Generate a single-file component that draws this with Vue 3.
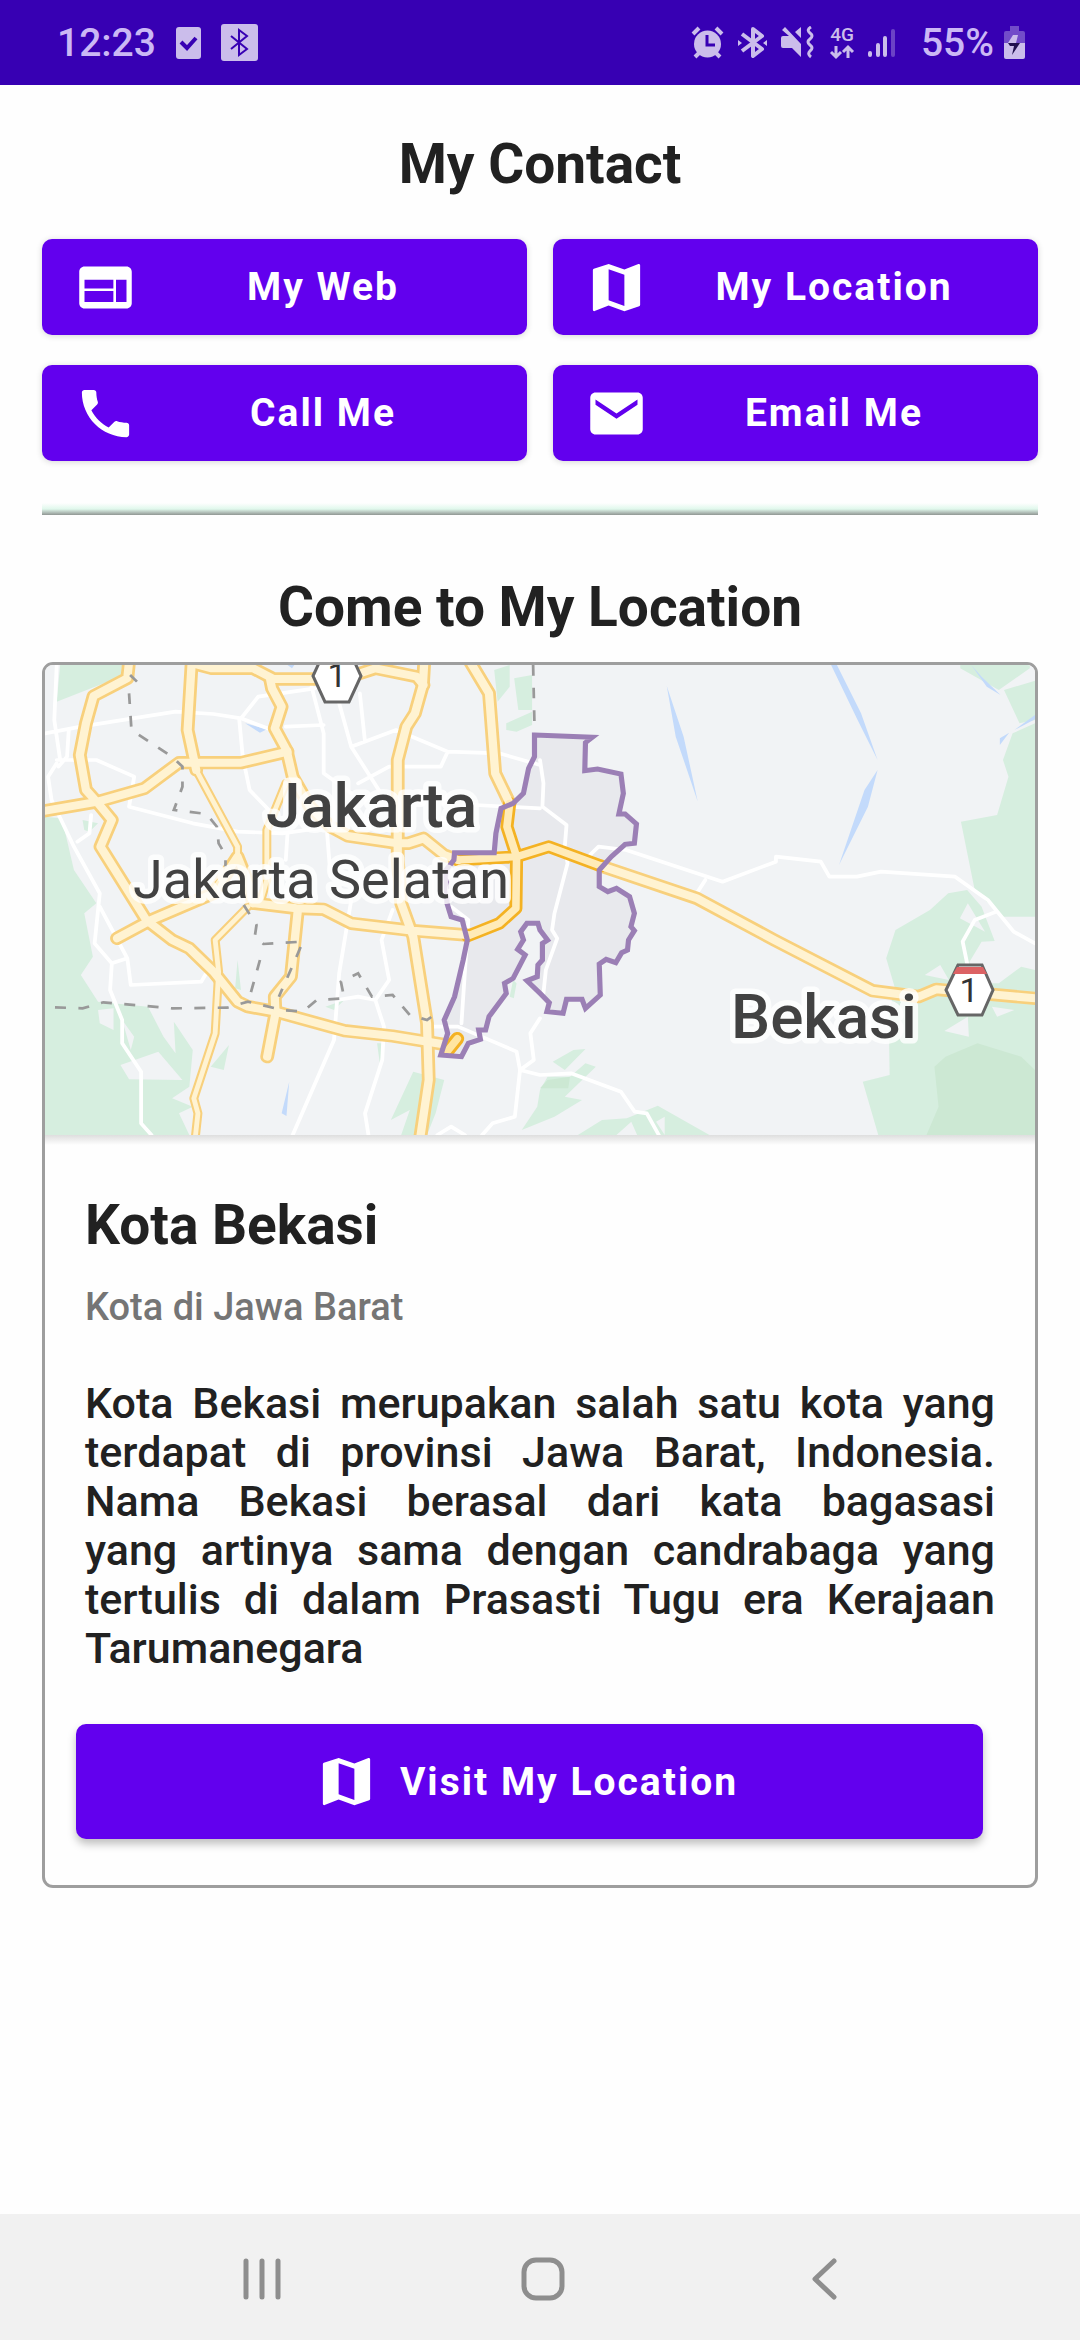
<script setup>
const contacts = [
  { label: 'My Web', icon: 'web' },
  { label: 'My Location', icon: 'map' },
  { label: 'Call Me', icon: 'call' },
  { label: 'Email Me', icon: 'mail' },
]

const icons = {
  web: 'M20 4H4c-1.100 0-2 .9-2 2v12c0 1.100.9 2 2 2h16c1.100 0 2-.9 2-2V6c0-1.100-.9-2-2-2zM15 17.500H4v-4.200h11zm0-5.100H4V9h11zm5 5.100h-4V9h4z',
  map: 'M20.500 3l-.16.03L15 5.100 9 3 3.360 4.900c-.21.07-.36.250-.36.480V20.500c0 .28.220.5.500.5l.16-.03L9 18.900l6 2.100 5.640-1.900c.21-.07.36-.250.36-.480V3.500c0-.28-.220-.5-.500-.5zM15 19l-6-2.110V5l6 2.110V19z',
  call: 'M6.620 10.790c1.440 2.830 3.760 5.140 6.590 6.590l2.200-2.200c.27-.27.67-.36 1.020-.24 1.120.37 2.330.57 3.570.57.55 0 1 .45 1 1V20c0 .55-.45 1-1 1-9.390 0-17-7.610-17-17 0-.55.45-1 1-1h3.500c.55 0 1 .45 1 1 0 1.250.2 2.450.57 3.570.11.35.03.74-.25 1.020l-2.200 2.200z',
  mail: 'M20 4H4c-1.100 0-1.990.9-1.990 2L2 18c0 1.100.9 2 2 2h16c1.100 0 2-.9 2-2V6c0-1.100-.9-2-2-2zm0 4.700l-8 5.300-8-5.300V6.700l8 5.300 8-5.300v2z',
}

const city = {
  name: 'Kota Bekasi',
  kind: 'Kota di Jawa Barat',
  about:
    'Kota Bekasi merupakan salah satu kota yang terdapat di provinsi Jawa Barat, Indonesia. Nama Bekasi berasal dari kata bagasasi yang\u00a0artinya sama dengan candrabaga yang tertulis di dalam Prasasti Tugu era Kerajaan Tarumanegara',
}

const cityBorder =
  '1552,525 1720,532 1700,548 1698,632 1735,627 1803,642 1810,700 1797,762 1815,762 1848,792 1842,850 1815,853 1775,890 1740,930 1740,980 1765,995 1790,985 1828,1010 1842,1060 1832,1100 1842,1112 1825,1140 1822,1170 1805,1178 1788,1208 1760,1198 1740,1212 1743,1305 1700,1345 1690,1318 1645,1318 1635,1360 1588,1355 1595,1328 1568,1300 1530,1262 1560,1250 1562,1215 1575,1200 1575,1150 1590,1140 1568,1110 1562,1090 1530,1090 1512,1115 1520,1140 1503,1168 1525,1185 1490,1255 1465,1270 1470,1300 1420,1370 1410,1410 1390,1410 1395,1438 1360,1450 1340,1490 1280,1485 1300,1420 1290,1380 1320,1310 1345,1200 1357,1140 1342,1080 1310,1070 1298,1030 1295,930 1318,900 1320,878 1435,878 1440,820 1455,745 1490,730 1520,700 1535,625 1552,590'
</script>

<template>
  <div class="screen">
    <header class="status">
      <div class="status-left">
        <time class="clock">12:23</time>
        <svg width="25" height="32" viewBox="0 0 25 32" aria-hidden="true">
          <rect width="25" height="32" rx="3" fill="#cbbdeb" />
          <path d="M5 15l6 6 9-10" fill="none" stroke="#3700b3" stroke-width="4" />
        </svg>
        <svg width="37" height="37" viewBox="0 0 37 37" aria-hidden="true">
          <rect width="37" height="37" rx="3" fill="#cbbdeb" />
          <path d="M10 12l16 13-8 6V6l8 6-16 13" fill="none" stroke="#3700b3" stroke-width="2" />
        </svg>
      </div>
      <div class="status-right">
        <svg width="33" height="33" viewBox="0 0 33 33" fill="none" stroke="#cbbdeb" aria-hidden="true">
          <circle cx="16.500" cy="18" r="13.500" fill="#cbbdeb" stroke="none" />
          <path d="M2 8l6-6M31 8l-6-6M8 27l-4 4M25 27l4 4" stroke-width="4" />
          <path d="M16 9v10h8" stroke="#3700b3" stroke-width="3" />
        </svg>
        <svg width="29" height="33" viewBox="0 0 29 33" fill="none" stroke="#cbbdeb" aria-hidden="true">
          <path d="M4 8l20 15-9 7V3l9 7L4 25" stroke-width="4" stroke-linejoin="round" />
          <path d="M0 14l4 3-4 3zM29 14l-4 3 4 3z" fill="#cbbdeb" stroke="none" />
        </svg>
        <svg width="35" height="33" viewBox="0 0 35 33" fill="#cbbdeb" aria-hidden="true">
          <path d="M2 10h6L1 4l3-3 16 17v13l-9-9H2q-2 0-2-2v-8q0-2 2-2zM20 1v11l-6-6z" />
          <path d="M30 1q-5 3-1 6t0 6q-4 3 0 6t0 6q-3 3 1 6" fill="none" stroke="#cbbdeb" stroke-width="3" />
        </svg>
        <svg class="data" width="24" height="33" viewBox="0 0 24 33" aria-hidden="true">
          <text x="12" y="15" class="network">4G</text>
          <path d="M6 20v10M1 26l5 5 5-5M18 32V22M13 26l5-5 5 5" fill="none" stroke="#cbbdeb" stroke-width="3" />
        </svg>
        <svg width="27" height="33" viewBox="0 0 27 33" stroke="#cbbdeb" stroke-width="4" stroke-linecap="round" aria-hidden="true">
          <path d="M2 27v2M10 19v10M17 12v17" />
          <path d="M25 5v24" opacity=".35" />
        </svg>
        <span class="charge">55%</span>
        <svg width="21" height="33" viewBox="0 0 21 33" fill="#cbbdeb" aria-hidden="true">
          <path d="M6 0h9v5h4q2 0 2 2v10H0V7q0-2 2-2h4z" opacity=".4" />
          <path d="M0 17h21v14q0 2-2 2H2q-2 0-2-2z" />
          <path d="M9 9h5l-2 8H4z" />
          <path d="M4 17h12L8 29l2-9H6z" fill="#21104f" />
        </svg>
      </div>
    </header>

    <main class="content">
      <h1 class="title">My Contact</h1>

      <div class="contacts">
        <button v-for="item in contacts" :key="item.icon" type="button" class="btn">
          <svg class="icon" viewBox="0 0 24 24" aria-hidden="true">
            <path :d="icons[item.icon]" fill="#fff" fill-rule="evenodd" />
          </svg>
          <span class="btn-label">{{ item.label }}</span>
        </button>
      </div>

      <div class="divider" role="separator"></div>

      <h2 class="title location-title">Come to My Location</h2>

      <article class="card">
        <svg class="map" viewBox="0 0 990 470" role="img" aria-label="Peta Kota Bekasi">
          <defs>
            <g id="wide-roads">
              <path d="M375 305L370 355L272 408L250 490L232 585L250 690L285 730L325 780L292 860L425 1080L500 1140L550 1165L620 1235L690 1325L720 1340L800 1355L1000 1412L1140 1428L1300 1455" />
              <path d="M120 754L285 725L420 685L520 608L700 608L835 575" />
              <path d="M557 305L545 510L570 630" />
              <path d="M560 310L615 325L735 325L795 357L930 357M1040 342L1090 325L1210 350L1230 375" />
              <path d="M785 360L790 385L818 440L798 505L832 570L850 650L900 740L960 800L1010 828L1155 850L1185 850L1230 835L1290 885L1330 900" />
              <path d="M1232 305L1228 375L1205 460L1180 500L1155 600L1155 900L1165 1030L1200 1130L1240 1390L1245 1560L1220 1735" />
              <path d="M1365 305L1420 400L1438 640L1480 730" />
              <path d="M740 1030L860 1045L940 1048L1020 1090L1200 1112L1355 1125" />
              <path d="M340 1135L435 1082L620 1000L690 890L725 980L735 1030" />
              <path d="M865 1050L845 1250L798 1310L800 1360L776 1490" />
              <path d="M1745 918L2023 1015L2248 1140L2533 1292L2668 1310L2718 1288L3015 1316" />
            </g>
            <g id="thin-roads">
              <path d="M570 630L690 860L690 890" />
              <path d="M720 1040L625 1140L635 1235L625 1420L563 1615L575 1660L567 1735" />
              <path d="M830 670L775 810L775 960L755 1030" />
            </g>
            <path id="toll-roads" d="M1480 730L1472 800L1500 890L1498 1045L1450 1090L1358 1128M1330 900L1500 890L1593 860L1745 918" />
          </defs>
          <svg width="990" height="470" viewBox="131 315 2874 1410" preserveAspectRatio="none">
            <rect x="131" y="315" width="2874" height="1410" fill="#f1f3f5" />
            <g fill="#d6eedf">
              <path d="M175 315H355L350 350L165 425Z" />
              <path d="M131 770L180 775L215 930L280 1030L245 1060L270 1190L235 1245L285 1325L430 1340L475 1430L510 1480L505 1385L560 1470L550 1580L500 1615L560 1640L520 1660L550 1725H131Z" />
              <path d="M2788 315L2788 325L2900 390L2990 325V315ZM3005 362L2915 390L2960 490L3005 480ZM3005 490L2940 520L2912 600L2928 650L2895 765L2790 785L2830 990L2908 1070H3005Z" />
              <path d="M2753 1000L2808 990L2850 1040L2888 1143L2850 1145L2815 1205L2815 1270L2900 1270L2965 1220L3005 1230V1725H2550L2505 1565L2583 1545L2580 1350L2600 1290L2573 1195L2600 1110L2700 1050Z" />
              <path d="M1435 330L1480 315V380L1445 425ZM1493 355L1545 345V450H1505ZM1545 455L1470 490V510L1500 515L1545 495Z" />
              <path d="M1200 1535L1290 1560L1265 1660L1240 1725H1165L1190 1650L1135 1680ZM1678 1725L1748 1680L1820 1675L1910 1637L2060 1725Z" />
              <path d="M1605 1505L1665 1470L1700 1467L1640 1530ZM1568 1590L1590 1550L1655 1550L1700 1510L1730 1520L1640 1610L1690 1620L1610 1670L1515 1710L1560 1640Z" />
              <path d="M690 1200L700 1290L683 1285ZM665 1455L650 1530L612 1520ZM240 780L285 790L260 815L245 810ZM1000 1320L970 1350L945 1340ZM1095 1450H1115L1103 1510ZM1490 1260L1500 1270L1492 1315L1480 1310Z" />
            </g>
            <path d="M2838 1450L2965 1490L3005 1530V1725H2690L2725 1640L2713 1520L2745 1490ZM1590 1560L1655 1550L1650 1585L1568 1585Z" fill="#cce8d3" />
            <g fill="#f1f3f5">
              <path d="M350 1515L460 1475L530 1560L375 1558ZM285 1350L330 1345V1410L290 1390ZM355 1380L390 1430L380 1470Z" />
              <path d="M2810 1030L2860 1115L2787 1075ZM2730 1215L2755 1260L2685 1245ZM2810 1370L2813 1430L2742 1413ZM2880 1340L2945 1350L2895 1370ZM1790 1725L1833 1685L1850 1725ZM1905 1685L1930 1670V1725Z" />
            </g>
            <g fill="#c3dafb">
              <path d="M1936 378L1985 530L2026 725L1962 530ZM2413 315H2430L2500 460L2548 600L2490 480ZM2548 630L2520 740L2436 915L2510 690ZM2820 315L2850 350L2905 405L2865 380ZM3005 465V478L2945 510ZM2930 518L2903 555V535ZM840 1565L832 1668L818 1660ZM712 490L775 508L755 518ZM835 315H855L848 325Z" />
            </g>
            <polygon :points="cityBorder" fill="#e8e9ed" />
            <g class="streets">
              <path d="M131 520L235 500L510 455L620 462L700 475L790 510M165 315L158 480L175 600M200 510L195 590L170 620M165 600L280 600L390 650L375 740L560 790L690 815L820 820L960 800" />
              <path d="M695 480L705 590L725 690L790 760M700 475L750 410L915 385M905 380L940 520L940 640L1020 700M985 430L1020 560L1100 690M1020 560L1150 510L1300 575L1450 580L1568 615M1300 575L1280 620L1130 620L1040 670M830 500L940 495M1045 400L1060 545M1380 735L1568 745M1240 840L1290 890" />
              <path d="M165 610L140 650L150 720L215 860L290 1000L275 1150L325 1210L320 1290L355 1380V1450L410 1535V1690L440 1725M290 1040L370 1195L380 1275L585 1265L610 1220M325 1210L370 1195M265 765L260 820L225 845M835 820L830 900M950 820L960 950" />
              <path d="M1020 1020L985 1240L970 1440L850 1725M1140 1050L1108 1140L1130 1260L1090 1320L1115 1400L1110 1500L1060 1660L1070 1725M980 1320L1040 1310L1090 1320M1260 1400L1330 1400L1500 1475L1510 1530L1495 1670L1430 1690L1400 1725M1310 1040L1360 1080L1340 1390M1568 1375L1540 1420L1550 1500L1510 1530L1568 1545L1658 1540L1803 1595L1843 1655L1878 1660L1913 1725M1270 1725L1310 1700L1350 1725" />
              <path d="M1568 600L1578 670L1575 740L1645 795L1640 860L1648 910L1610 1060L1603 1110L1618 1135L1585 1230L1578 1300M1713 885L1738 860L1818 870L2098 965L2253 905V890L2383 905L2408 950L2488 950L2558 935L2773 950L2868 1020L2943 1115L3005 1150M2048 960L2023 1000M2893 1055L2830 1080L2795 1145L2808 1210" />
            </g>
            <g class="road-layer">
              <use href="#thin-roads" stroke="#f8d07c" stroke-width="26" />
              <use href="#wide-roads" stroke="#f8d07c" stroke-width="40" />
              <use href="#toll-roads" stroke="#f4b223" stroke-width="38" />
              <use href="#thin-roads" stroke="#fff3d2" stroke-width="14" />
              <use href="#wide-roads" stroke="#fff3d2" stroke-width="24" />
              <use href="#toll-roads" stroke="#ffebb8" stroke-width="22" />
              <path d="M1300 1472L1328 1436" stroke="#f4b223" stroke-width="40" />
              <path d="M1300 1472L1328 1436" stroke="#ffe5a0" stroke-width="22" />
            </g>
            <path class="district" d="M378 345L398 365M375 400L382 510L500 590L530 620V680L505 750L600 762L630 800L635 850L655 885V920M708 1035L745 1095L740 1130L765 1152L880 1145L840 1240L810 1310M755 1200L728 1300M160 1342L240 1345L300 1327L500 1345L660 1343L720 1325L820 1350L880 1355L920 1320L1000 1315L990 1265L1040 1240L1080 1310L1140 1305L1190 1365L1240 1380L1280 1350M1548 315L1552 500" />
            <polygon :points="cityBorder" class="border" />
          </svg>
          <text class="place" x="221" y="162">Jakarta</text>
          <text class="place place-minor" x="88" y="233">Jakarta Selatan</text>
          <text class="place" x="686" y="373">Bekasi</text>
          <g class="shield">
            <path d="M268 11L280-15H304L316 11L304 37H280Z" />
            <text x="292" y="22">1</text>
            <path d="M901 325L913 300H937L948 325L937 350H913Z" />
            <path d="M912 302H938L942 309H908Z" class="shield-band" />
            <text x="924" y="337">1</text>
          </g>
        </svg>

        <div class="card-body">
          <h3 class="title city-name">{{ city.name }}</h3>
          <p class="kind">{{ city.kind }}</p>
          <p class="about">{{ city.about }}</p>
        </div>

        <button type="button" class="btn visit">
          <svg class="icon" viewBox="0 0 24 24" aria-hidden="true">
            <path :d="icons.map" fill="#fff" fill-rule="evenodd" />
          </svg>
          <span>Visit My Location</span>
        </button>
      </article>
    </main>

    <nav class="system-nav">
      <button type="button" aria-label="Recent apps">
        <svg width="44" height="44" viewBox="0 0 44 44"><path d="M6 4v36M22 4v36M38 4v36" /></svg>
      </button>
      <button type="button" aria-label="Home">
        <svg width="44" height="44" viewBox="0 0 44 44"><rect x="3" y="3" width="38" height="38" rx="12" /></svg>
      </button>
      <button type="button" aria-label="Back">
        <svg width="44" height="44" viewBox="0 0 44 44"><path d="M32 4L13 22l19 18" /></svg>
      </button>
    </nav>
  </div>
</template>

<style>
body {
  margin: 0;
  background: #fff;
}
</style>

<style scoped>
.screen {
  display: flex;
  flex-direction: column;
  min-height: 100vh;
  background: #fefefe;
  color: #212121;
  font-family: Roboto, "Noto Sans", sans-serif;
}

.status {
  display: flex;
  align-items: center;
  justify-content: space-between;
  height: 85px;
  padding: 0 55px 0 57px;
  background: #3700b3;
  color: #cbb8f5;
}

.status-left,
.status-right {
  display: flex;
  align-items: center;
}

.status-left {
  gap: 20px;
}

.status-right {
  gap: 14px;
}

.clock,
.charge {
  font-size: 39px;
  font-weight: 500;
  line-height: 48px;
}

.charge {
  margin: 0 -4px 0 12px;
}

.data {
  overflow: visible;
}

.network {
  fill: #cbbdeb;
  font-size: 19px;
  font-weight: 500;
  text-anchor: middle;
}

.content {
  display: flex;
  flex-direction: column;
  padding: 43px 42px 0;
}

.title {
  margin: 0;
  font-size: 55px;
  font-weight: 700;
  line-height: 72px;
  text-align: center;
}

.contacts {
  display: grid;
  grid-template-columns: 1fr 1fr;
  gap: 30px 26px;
  margin-top: 39px;
}

.btn {
  display: flex;
  align-items: center;
  gap: 12px;
  height: 96px;
  padding: 0 30px 0 32px;
  border: 0;
  border-radius: 10px;
  background: #6200ee;
  box-shadow: 0 1px 6px rgba(0, 0, 0, 0.16);
  color: #fff;
  font-family: inherit;
  font-size: 39px;
  font-weight: 700;
  letter-spacing: 2px;
}

.btn-label {
  flex: 1;
}

.icon {
  flex: none;
  width: 63px;
  height: 63px;
}

.divider {
  height: 12px;
  margin-top: 42px;
  background: linear-gradient(#fefefe, #e0f8ec 50%, #909693);
}

.location-title {
  margin-top: 56px;
}

.card {
  display: flex;
  flex-direction: column;
  margin-top: 19px;
  overflow: hidden;
  border: 3px solid #9e9e9e;
  border-radius: 11px;
}

.map {
  display: block;
  width: 100%;
  height: auto;
}

.streets,
.road-layer {
  fill: none;
  stroke-linecap: round;
  stroke-linejoin: round;
}

.streets {
  stroke: #fff;
  stroke-width: 11;
}

.district {
  fill: none;
  stroke: #999;
  stroke-width: 8;
  stroke-dasharray: 32 36;
}

.border {
  fill: none;
  stroke: #9b7fb5;
  stroke-width: 15;
}

.place {
  fill: #424242;
  font-size: 62px;
  font-weight: 500;
  paint-order: stroke;
  stroke: rgba(255, 255, 255, 0.8);
  stroke-linejoin: round;
  stroke-width: 11px;
}

.place-minor {
  font-size: 54px;
  font-weight: 400;
}

.shield {
  fill: #fff;
  stroke: #666;
  stroke-width: 3px;
}

.shield text {
  fill: #333;
  stroke: none;
  font-size: 34px;
  text-anchor: middle;
}

.shield-band {
  fill: #dc6264;
  stroke: none;
}

.card-body {
  padding: 54px 40px 0;
  background: linear-gradient(#dedede, #fefefe 10px);
}

.city-name {
  text-align: left;
}

.kind {
  margin: 21px 0 0;
  color: #757575;
  font-size: 38px;
  font-weight: 500;
  line-height: 50px;
}

.about {
  margin: 47px 0 0;
  font-size: 43px;
  font-weight: 500;
  line-height: 49px;
  text-align: justify;
}

.visit {
  justify-content: center;
  gap: 22px;
  height: 115px;
  margin: 51px 52px 46px 31px;
  padding: 0 38px 0 32px;
  box-shadow: 0 5px 8px rgba(0, 0, 0, 0.25);
}

.system-nav {
  display: grid;
  grid-template-columns: repeat(3, 1fr);
  height: 126px;
  margin-top: auto;
  padding: 4px 116px 0 121px;
  box-sizing: border-box;
  background: #f1f1f1;
}

.system-nav button {
  display: flex;
  align-items: center;
  justify-content: center;
  padding: 0;
  border: 0;
  background: none;
}

.system-nav svg {
  fill: none;
  stroke: #8e8e8e;
  stroke-linecap: round;
  stroke-linejoin: round;
  stroke-width: 5px;
}
</style>
